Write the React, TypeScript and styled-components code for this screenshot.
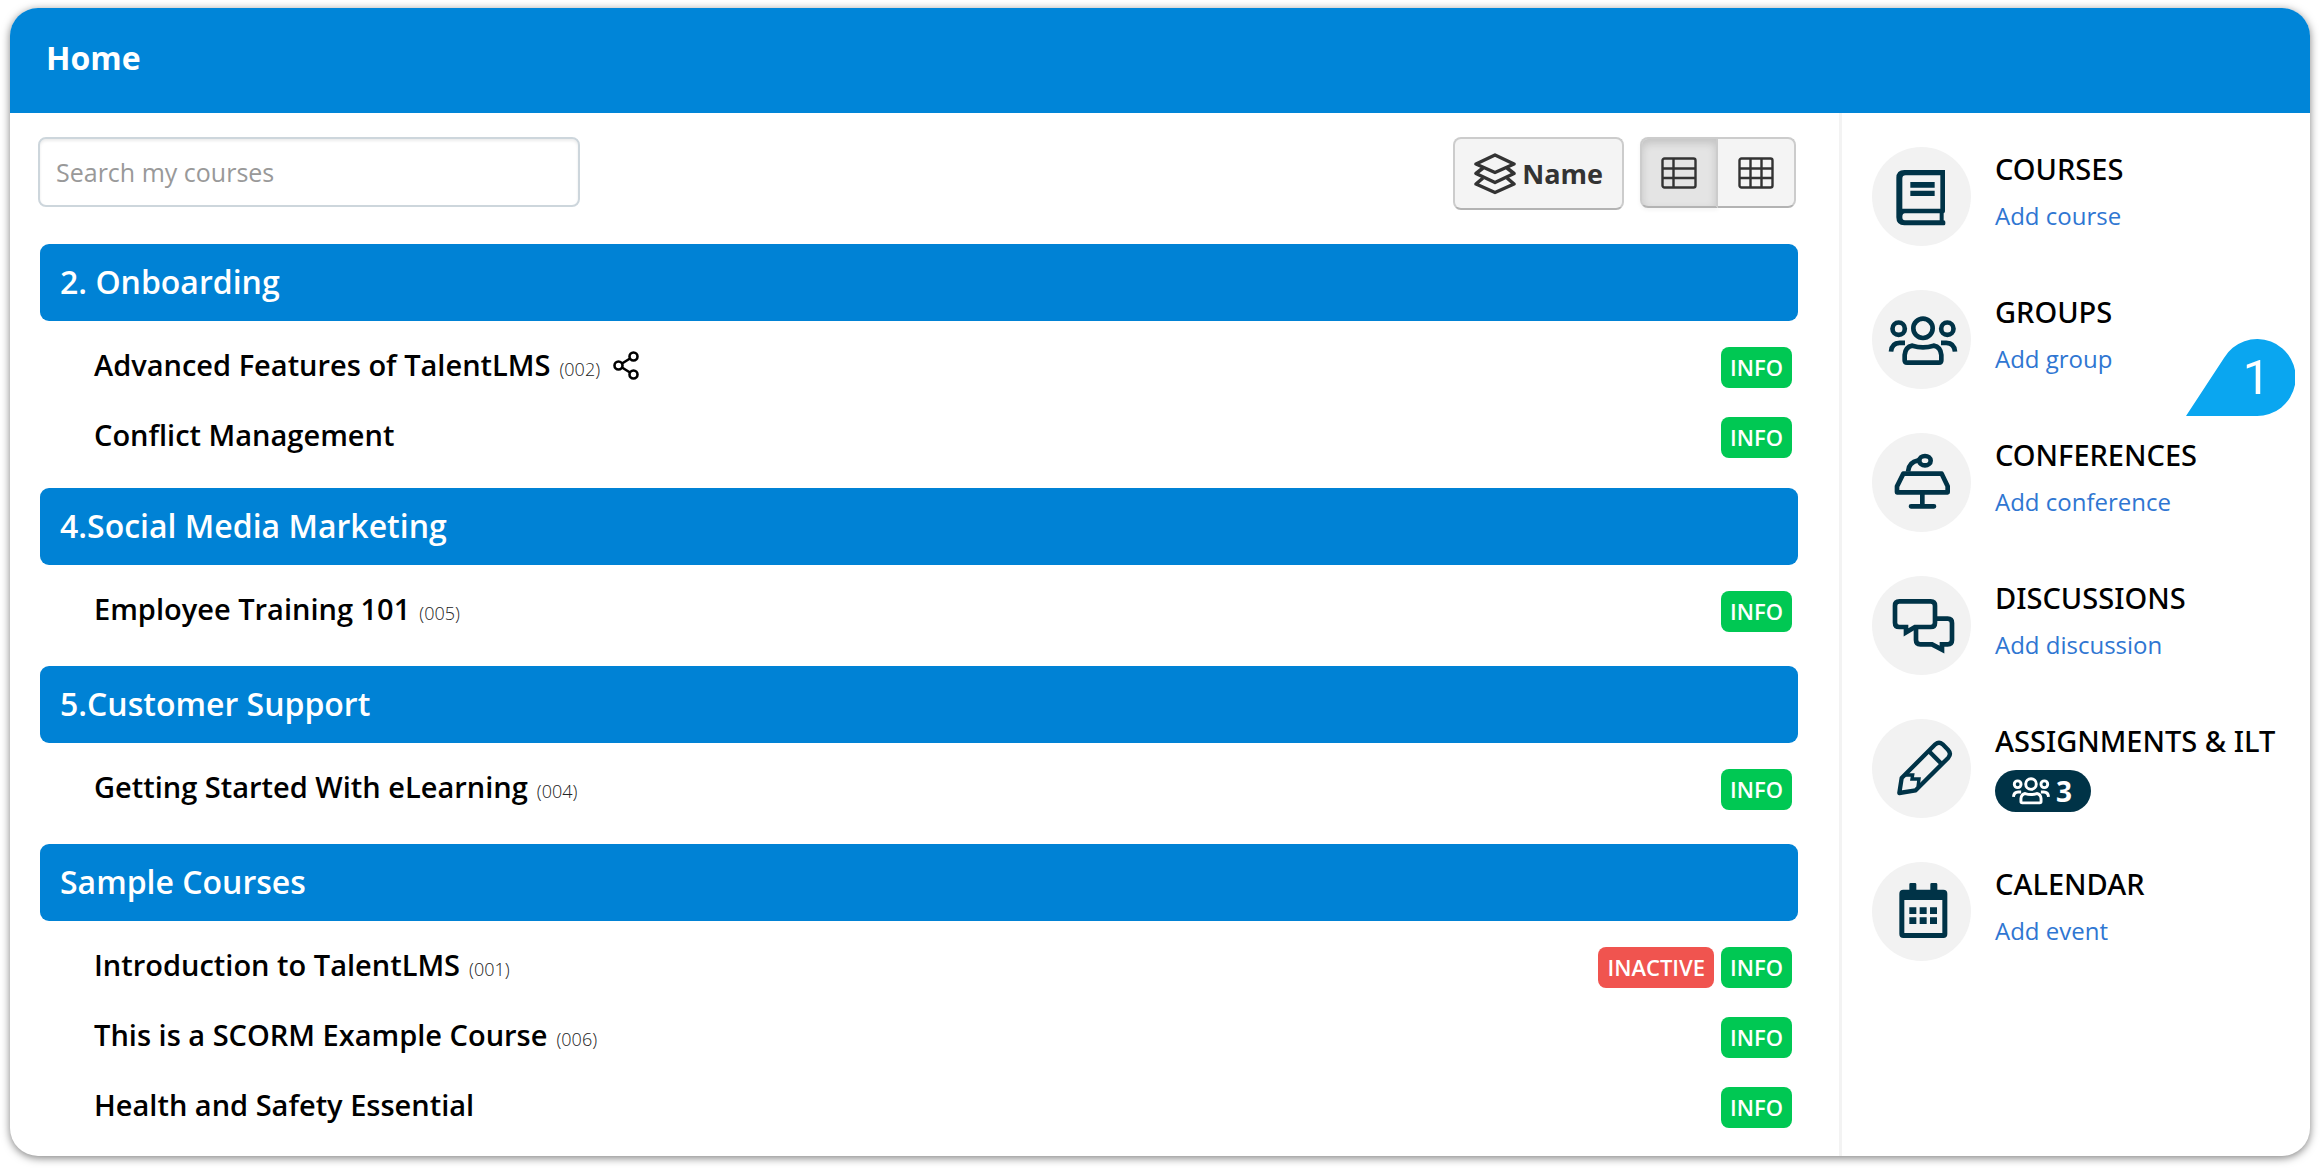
import React from "react";
import styled, { createGlobalStyle } from "styled-components";

const GlobalStyle = createGlobalStyle`
  *, *::before, *::after { box-sizing: border-box; }
  body { margin: 0; background: #fff; color: #000; font-family: "Open Sans", "Noto Sans", sans-serif; }
  button, input { font: inherit; }
  a { color: inherit; text-decoration: none; }
  svg { display: block; flex: none; }
`;

const Page = styled.div`
  min-height: 100vh;
  padding: 8px 10px 12px;
  display: flex;
`;

const Card = styled.div`
  position: relative;
  flex: 1;
  min-width: 0;
  display: flex;
  flex-direction: column;
  border-radius: 28px;
  background: #fff;
  box-shadow: 0 2px 8px rgba(0, 0, 0, 0.5);
`;

const Header = styled.header`
  padding: 28px 36px 33px;
  border-radius: 28px 28px 0 0;
  background: #0085d8;
`;

const PageTitle = styled.h1`
  margin: 0;
  color: #fff;
  font-size: 32px;
  line-height: 44px;
  font-weight: 700;
`;

const Columns = styled.div`
  flex: 1;
  display: flex;
`;

const Main = styled.main`
  flex: 1;
  min-width: 0;
  padding: 24px 41px 0 28px;
`;

const Toolbar = styled.div`
  display: flex;
  align-items: flex-start;
  gap: 16px;
  margin-bottom: 34px;
  padding-right: 2px;
`;

const Search = styled.input`
  width: 542px;
  height: 70px;
  margin-right: auto;
  padding: 0 16px;
  border: 2px solid #cdd6dc;
  border-radius: 8px;
  background: #fff;
  box-shadow: inset 0 2px 3px rgba(0, 0, 0, 0.08);
  font-size: 25px;
  color: #333;
  &::placeholder { color: #999; opacity: 1; }
`;

const SortButton = styled.button`
  display: flex;
  align-items: center;
  gap: 6px;
  height: 73px;
  padding: 0 19px;
  border: 2px solid #ccc;
  border-bottom-color: #b3b3b3;
  border-radius: 8px;
  background: #f4f4f4;
  color: #333;
  font-size: 27px;
  font-weight: 700;
`;

const ViewSwitch = styled.div`
  display: flex;
`;

const ViewButton = styled.button<{ $active?: boolean }>`
  display: flex;
  align-items: center;
  justify-content: center;
  width: 78px;
  height: 71px;
  padding: 0;
  border: 2px solid #ccc;
  border-bottom-color: #b3b3b3;
  border-radius: ${(p) => (p.$active ? "8px 0 0 8px" : "0 8px 8px 0")};
  border-left-width: ${(p) => (p.$active ? "2px" : "0")};
  background: ${(p) => (p.$active ? "#e4e4e4" : "#f4f4f4")};
  box-shadow: ${(p) => (p.$active ? "inset 0 4px 8px rgba(0, 0, 0, 0.15), 0 2px 4px rgba(0, 0, 0, 0.05)" : "none")};
  color: #333;
`;

const Sections = styled.div`
  padding-left: 2px;
`;

const SectionTitle = styled.h2`
  margin: 0;
  height: 77px;
  padding: 0 20px;
  border-radius: 9px;
  background: #0082d5;
  color: #fff;
  font-size: 32px;
  line-height: 75px;
  font-weight: 600;
`;

const CourseList = styled.ul`
  margin: 0;
  min-height: 101px;
  padding: 12px 6px 15px 54px;
  list-style: none;

  section:last-child > & {
    padding-bottom: 0;
  }
`;

const CourseRow = styled.li`
  display: flex;
  justify-content: space-between;
  height: 70px;
`;

const CourseName = styled.div`
  display: flex;
  align-items: baseline;
  gap: 9px;
  line-height: 63px;
`;

const CourseLink = styled.a`
  font-size: 29px;
  font-weight: 600;
`;

const Code = styled.span`
  font-size: 18px;
  font-weight: 300;
  color: #222;
`;

const ShareBox = styled.span`
  align-self: center;
  padding: 0 0 5px 4px;
`;

const Tags = styled.div`
  display: flex;
  align-items: center;
  gap: 7px;
  padding-bottom: 2px;
`;

const InfoButton = styled.button`
  height: 41px;
  padding: 0 9px;
  border: 0;
  border-radius: 8px;
  background: #00c853;
  color: #fff;
  font-size: 22px;
  line-height: 41px;
  font-weight: 600;
`;

const InactiveTag = styled.span`
  height: 41px;
  padding: 0 9px;
  border-radius: 8px;
  background: #f0544f;
  color: #fff;
  font-size: 22px;
  line-height: 41px;
  font-weight: 600;
`;

const Sidebar = styled.aside`
  flex: 0 0 471px;
  display: flex;
  flex-direction: column;
  gap: 44px;
  padding: 34px 0 34px 30px;
  border-left: 3px solid #f3f3f3;
`;

const MenuItem = styled.div`
  display: flex;
  gap: 24px;
  height: 99px;
`;

const IconDisc = styled.div`
  flex: none;
  width: 99px;
  height: 99px;
  border-radius: 50%;
  background: #f2f2f2;
  color: #003347;
`;

const MenuText = styled.div`
  white-space: nowrap;
`;

const MenuTitle = styled.h3`
  margin: 0;
  font-family: "Noto Sans", "Open Sans", sans-serif;
  font-size: 29px;
  line-height: 44px;
  font-weight: 500;
`;

const MenuLink = styled.a`
  display: block;
  margin-top: 7px;
  color: #2f76d2;
  font-size: 24px;
  line-height: 36px;
`;

const CountBadge = styled.a`
  display: flex;
  align-items: center;
  gap: 6px;
  width: 96px;
  height: 42px;
  margin-top: 7px;
  padding-left: 17px;
  border-radius: 21px;
  background: #003347;
  color: #fff;
  font-size: 28px;
  font-weight: 700;
`;

const Marker = styled.div`
  position: absolute;
  top: 331px;
  right: 15px;
  width: 109px;
  height: 78px;
`;

const MarkerShape = styled.svg`
  position: absolute;
  inset: 0;
`;

const MarkerLabel = styled.span`
  position: absolute;
  top: 0;
  right: 0;
  width: 77px;
  color: #fff;
  font-family: Roboto, sans-serif;
  font-size: 49px;
  line-height: 77px;
  font-weight: 400;
  text-align: center;
`;

const LayersIcon = () => (
  <svg width="42" height="42" viewBox="0 0 42 42" fill="none" stroke="currentColor" strokeWidth="3.500" strokeLinejoin="round" aria-hidden="true">
    <path d="M21 2 40 11 21 19.500 2 11Z" />
    <path d="M9 15 2 20.500 21 29.500 40 20.500 33 15" />
    <path d="M9 25 2 31 21 39.500 40 31 33 25" />
  </svg>
);

const ListIcon = () => (
  <svg width="36" height="32" viewBox="0 0 36 32" fill="none" stroke="currentColor" strokeWidth="2.400" aria-hidden="true">
    <rect x="1.500" y="1.500" width="33" height="29" rx="2" />
    <path d="M12.500 1V31M1 11.500H35M1 21H35" />
  </svg>
);

const GridIcon = () => (
  <svg width="36" height="32" viewBox="0 0 36 32" fill="none" stroke="currentColor" strokeWidth="2.400" aria-hidden="true">
    <rect x="1.500" y="1.500" width="33" height="29" rx="2" />
    <path d="M12.500 1V31M23.500 1V31M1 11.500H35M1 21H35" />
  </svg>
);

const ShareIcon = () => (
  <svg width="27" height="29" viewBox="0 0 27 29" fill="none" stroke="currentColor" strokeWidth="2.600" role="img" aria-label="Shared">
    <circle cx="5.500" cy="14.500" r="4" />
    <circle cx="20.500" cy="5.500" r="4" />
    <circle cx="20.500" cy="23.500" r="4" />
    <path d="M9 12.500 17 7.500M9 16.500 17 21.500" />
  </svg>
);

const BookIcon = () => (
  <svg width="99" height="99" viewBox="95 81 297 297" fill="currentColor" fillRule="evenodd" aria-hidden="true">
    <path d="M314 150H192Q168 150 168 174V292Q168 316 192 316H311Q315 316 315 311V306Q315 302 310 301V280Q314 278 314 274ZM300 166V266H186V176Q186 166 196 166ZM298 280V301H194Q186 301 186 291Q186 280 194 280Z" />
    <path d="M210 186H283V203H210ZM210 212H283V228H210Z" />
  </svg>
);

const PeoplePaths = () => (
  <>
    <circle cx="248" cy="628" r="29" />
    <circle cx="175" cy="629" r="18.500" />
    <circle cx="321" cy="629" r="18.500" />
    <path d="M193 724V708Q195 684 216 680Q248 690 280 680Q301 684 303 708V724Q303 731 296 731H200Q193 731 193 724Z" />
    <path d="M152 698Q154 672 178 671.500H194M344 698Q342 672 318 671.500H302" />
  </>
);

const GroupsIcon = () => (
  <svg width="99" height="99" viewBox="95 513 297 297" fill="none" stroke="currentColor" strokeWidth="14" aria-hidden="true">
    <PeoplePaths />
  </svg>
);

const PeopleIcon = () => (
  <svg width="38" height="28" viewBox="144 590 208 152" fill="none" stroke="currentColor" strokeWidth="16" aria-hidden="true">
    <PeoplePaths />
  </svg>
);

const ConferenceIcon = () => (
  <svg width="99" height="99" viewBox="95 70 297 297" fill="none" stroke="currentColor" strokeWidth="14" strokeLinejoin="round" strokeLinecap="round" aria-hidden="true">
    <path d="M189 192H304L322 230V248H170V230Z" />
    <path d="M246 250V289M212 290H281" />
    <ellipse cx="254" cy="153" rx="17" ry="14" />
    <path d="M203 186C204 168 212 156 234 152" strokeLinecap="butt" />
  </svg>
);

const DiscussionIcon = () => (
  <svg width="99" height="99" viewBox="95 502 297 297" fill="none" stroke="currentColor" strokeWidth="14" aria-hidden="true">
    <path d="M177 578H271Q284 578 284 591V642Q284 655 271 655H224L197 671V655H177Q164 655 164 642V591Q164 578 177 578Z" />
    <path d="M288 630H322Q335 630 335 643V694Q335 707 322 707H305V723L275 707H240Q227 707 227 694V658" />
  </svg>
);

const PencilIcon = () => (
  <svg width="99" height="99" viewBox="95 87 297 297" fill="none" stroke="currentColor" strokeWidth="13" strokeLinejoin="round" aria-hidden="true">
    <path d="M177 309 184 264 285 163Q296 153 307 163L323 179Q334 191 324 203L226 301Z" />
    <path d="M266 184 302 220" />
    <path d="M192 255H217L215 267H236L233 290" strokeWidth="10" strokeLinejoin="miter" />
  </svg>
);

const CalendarIcon = () => (
  <svg width="99" height="99" viewBox="95 519 297 297" fill="currentColor" fillRule="evenodd" aria-hidden="true">
    <path d="M207 602V586Q207 582 211 582H224Q228 582 228 586V602H270V586Q270 582 274 582H287Q291 582 291 586V602H309Q321 602 321 614V735Q321 747 309 747H189Q177 747 177 735V614Q177 602 189 602ZM192 633V732H306V633Z" />
    <path d="M207 655H228V675H207ZM238 655H259V675H238ZM269 655H290V675H269ZM207 685H228V705H207ZM238 685H259V705H238ZM269 685H290V705H269Z" />
  </svg>
);

type Course = { name: string; code?: string; shared?: boolean; inactive?: boolean };

const sections: { title: string; courses: Course[] }[] = [
  {
    title: "2. Onboarding",
    courses: [
      { name: "Advanced Features of TalentLMS", code: "(002)", shared: true },
      { name: "Conflict Management" },
    ],
  },
  { title: "4.Social Media Marketing", courses: [{ name: "Employee Training 101", code: "(005)" }] },
  { title: "5.Customer Support", courses: [{ name: "Getting Started With eLearning", code: "(004)" }] },
  {
    title: "Sample Courses",
    courses: [
      { name: "Introduction to TalentLMS", code: "(001)", inactive: true },
      { name: "This is a SCORM Example Course", code: "(006)" },
      { name: "Health and Safety Essential" },
    ],
  },
];

const menu: { title: string; icon: React.ReactNode; link?: string; count?: number }[] = [
  { title: "COURSES", icon: <BookIcon />, link: "Add course" },
  { title: "GROUPS", icon: <GroupsIcon />, link: "Add group" },
  { title: "CONFERENCES", icon: <ConferenceIcon />, link: "Add conference" },
  { title: "DISCUSSIONS", icon: <DiscussionIcon />, link: "Add discussion" },
  { title: "ASSIGNMENTS & ILT", icon: <PencilIcon />, count: 3 },
  { title: "CALENDAR", icon: <CalendarIcon />, link: "Add event" },
];

export default function App() {
  return (
    <>
      <GlobalStyle />
      <Page>
        <Card>
          <Header>
            <PageTitle>Home</PageTitle>
          </Header>
          <Columns>
            <Main>
              <Toolbar>
                <Search type="search" placeholder="Search my courses" aria-label="Search my courses" />
                <SortButton type="button">
                  <LayersIcon />
                  Name
                </SortButton>
                <ViewSwitch>
                  <ViewButton type="button" $active aria-pressed="true" aria-label="List view">
                    <ListIcon />
                  </ViewButton>
                  <ViewButton type="button" aria-pressed="false" aria-label="Grid view">
                    <GridIcon />
                  </ViewButton>
                </ViewSwitch>
              </Toolbar>
              <Sections>
                {sections.map((section) => (
                  <section key={section.title}>
                    <SectionTitle>{section.title}</SectionTitle>
                    <CourseList>
                      {section.courses.map((course) => (
                        <CourseRow key={course.name}>
                          <CourseName>
                            <CourseLink href="#">{course.name}</CourseLink>
                            {course.code && <Code>{course.code}</Code>}
                            {course.shared && (
                              <ShareBox>
                                <ShareIcon />
                              </ShareBox>
                            )}
                          </CourseName>
                          <Tags>
                            {course.inactive && <InactiveTag>INACTIVE</InactiveTag>}
                            <InfoButton type="button">INFO</InfoButton>
                          </Tags>
                        </CourseRow>
                      ))}
                    </CourseList>
                  </section>
                ))}
              </Sections>
            </Main>
            <Sidebar>
              {menu.map((item) => (
                <MenuItem key={item.title}>
                  <IconDisc>{item.icon}</IconDisc>
                  <MenuText>
                    <MenuTitle>{item.title}</MenuTitle>
                    {item.link && <MenuLink href="#">{item.link}</MenuLink>}
                    {item.count && (
                      <CountBadge href="#">
                        <PeopleIcon />
                        {item.count}
                      </CountBadge>
                    )}
                  </MenuText>
                </MenuItem>
              ))}
            </Sidebar>
          </Columns>
          <Marker>
            <MarkerShape width="109" height="78" viewBox="0 0 109 78" fill="#0aa6f0" aria-hidden="true">
              <path d="M0 77 38 19A38.500 38.500 0 1 1 70 77Z" />
            </MarkerShape>
            <MarkerLabel>1</MarkerLabel>
          </Marker>
        </Card>
      </Page>
    </>
  );
}
